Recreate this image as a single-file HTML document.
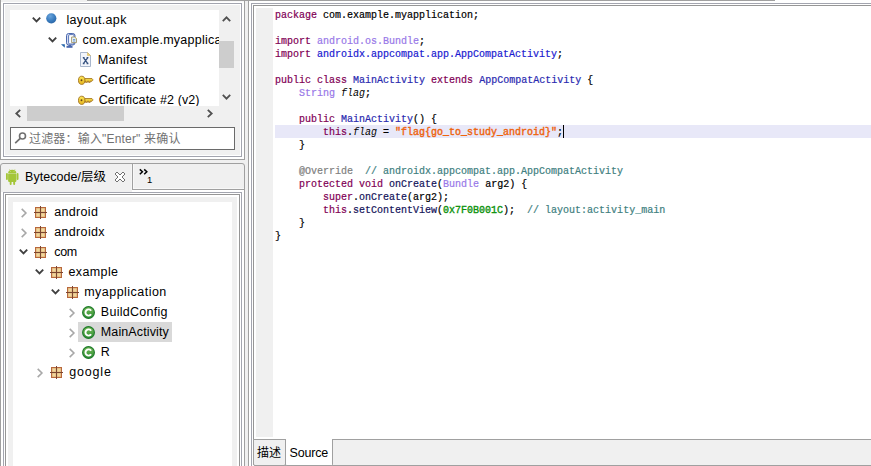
<!DOCTYPE html>
<html><head><meta charset="utf-8"><title>JEB</title><style>
html,body{margin:0;padding:0;width:871px;height:466px;overflow:hidden;}
#root{position:absolute;left:0;top:0;width:871px;height:466px;overflow:hidden;background:#f0f0f0;}
body{width:871px;height:466px;overflow:hidden;background:#f0f0f0;position:relative;font-family:"Liberation Sans","Noto Sans CJK SC",sans-serif;font-size:12.5px;color:#000;}
.a{position:absolute;}
.box{position:absolute;box-sizing:border-box;}
.t{position:absolute;white-space:nowrap;line-height:20px;height:20px;font-size:12.5px;color:#000;}
.code{position:absolute;left:275px;top:9px;-webkit-text-stroke:0.2px currentColor;font-family:"Liberation Mono",monospace;font-size:10px;line-height:13px;white-space:pre;color:#000;}
.code div{height:13px;}
.k{color:#7f0055;}
.c1{color:#2a2ab0;}
.c2{color:#9878e8;}
.c3{color:#1a1ad0;}
.f{font-style:italic;-webkit-text-stroke:0;}
.s{color:#ee6410;-webkit-text-stroke:0.4px currentColor;}
.n{color:#0c920c;-webkit-text-stroke:0.35px currentColor;}
.cm{color:#408080;}
.an{color:#808080;}
.m{color:#14145a;}
svg{position:absolute;overflow:visible;}
</style></head><body><div id="root">
<div class="box" style="left:0;top:-2px;width:245px;height:162px;border:1px solid #a0a0a0;background:#fff;"></div>
<div class="box" style="left:3px;top:3px;width:239px;height:154px;border:1px solid #a3a5af;background:#fff;"></div>
<div class="a" style="left:5px;top:5px;width:235px;height:150px;background:#f0f0f0;"></div>
<div class="a" style="left:0px;top:0px;width:87px;height:2px;background:#f0f0f0;"></div>
<div class="a" style="left:87px;top:1px;width:157px;height:1px;background:#f8f8f8;"></div>
<div class="a" style="left:0px;top:0px;width:1px;height:2px;background:#a0a0a0;"></div>
<div class="a" style="left:10px;top:10px;width:209px;height:96px;background:#fff;"></div>
<div class="a" style="left:219px;top:41px;width:15px;height:27px;background:#cdcdcd;"></div>
<div class="a" style="left:27px;top:106px;width:97px;height:15px;background:#cdcdcd;"></div>
<div class="box" style="left:10px;top:127px;width:225px;height:23px;border:1px solid #6a6a6a;background:#fff;"></div>
<div class="box" style="left:0;top:163px;width:245px;height:320px;border:1px solid #a0a0a0;border-radius:3px 3px 0 0;background:#f0f0f0;"></div>
<div class="a" style="left:133px;top:164px;width:1px;height:25px;background:#f8f8f8;"></div>
<div class="a" style="left:133px;top:188px;width:111px;height:1px;background:#f8f8f8;"></div>
<div class="a" style="left:131px;top:165px;width:1px;height:25px;background:#f6f6f6;"></div>
<div class="a" style="left:132px;top:164px;width:1px;height:26px;background:#a0a0a0;"></div>
<div class="a" style="left:132px;top:189px;width:112px;height:1px;background:#a0a0a0;"></div>
<div class="a" style="left:1px;top:190px;width:243px;height:300px;background:#fff;"></div>
<div class="a" style="left:1px;top:190px;width:131px;height:2px;background:#f0f0f0;"></div>
<div class="box" style="left:3px;top:192px;width:239px;height:300px;border:1px solid #a3a5af;background:#fff;"></div>
<div class="box" style="left:5px;top:194px;width:235px;height:300px;border:1px solid #969696;background:#fff;"></div>
<div class="a" style="left:8px;top:197px;width:229px;height:300px;background:#f0f0f0;"></div>
<div class="a" style="left:13px;top:202px;width:219px;height:300px;background:#fff;"></div>
<div class="box" style="left:248px;top:-1px;width:700px;height:500px;border:1px solid #a0a0a0;background:#fff;"></div>
<div class="box" style="left:251px;top:3px;width:700px;height:500px;border:1px solid #a3a5af;background:#fff;"></div>
<div class="box" style="left:253px;top:5px;width:700px;height:460px;border:1px solid #969696;background:#fff;"></div>
<div class="a" style="left:256px;top:8px;width:17px;height:429px;background:#f0f0f0;"></div>
<div class="a" style="left:275px;top:125px;width:600px;height:13px;background:#e8e8f8;"></div>
<div class="a" style="left:563px;top:125px;width:1px;height:13px;background:#000;"></div>
<div class="a" style="left:254px;top:439px;width:700px;height:26px;background:#f0f0f0;"></div>
<div class="a" style="left:254px;top:439px;width:700px;height:1px;background:#a0a0a0;"></div>
<div class="a" style="left:254px;top:465px;width:700px;height:1px;background:#a0a0a0;"></div>
<div class="box" style="left:253px;top:439px;width:33px;height:27px;border:1px solid #a0a0a0;border-radius:0 0 2px 2px;background:#f0f0f0;"></div>
<div class="box" style="left:285px;top:439px;width:48px;height:27px;border:1px solid #a0a0a0;border-top:none;border-radius:0 0 2px 2px;background:#fff;"></div>
<div class="a" style="left:87px;top:0px;width:688px;height:1px;background:#a0a0a0;"></div>
<div class="code"><div><span class="k">package</span> com.example.myapplication;</div><div></div><div><span class="k">import</span> <span class="c2">android.os.Bundle</span>;</div><div><span class="k">import</span> <span class="c3">androidx.appcompat.app.AppCompatActivity</span>;</div><div></div><div><span class="k">public</span> <span class="k">class</span> <span class="c1">MainActivity</span> <span class="k">extends</span> <span class="c1">AppCompatActivity</span> {</div><div>    <span class="c2">String</span> <span class="f">flag</span>;</div><div></div><div>    <span class="k">public</span> <span class="c1">MainActivity</span>() {</div><div>        <span class="k">this</span>.<span class="f">flag</span> = <span class="s">&quot;flag{go_to_study_android}&quot;</span>;</div><div>    }</div><div></div><div>    <span class="an">@Override</span>  <span class="cm">// androidx.appcompat.app.AppCompatActivity</span></div><div>    <span class="k">protected</span> <span class="k">void</span> <span class="m">onCreate</span>(<span class="c2">Bundle</span> arg2) {</div><div>        <span class="k">super</span>.<span class="m">onCreate</span>(arg2);</div><div>        <span class="k">this</span>.<span class="m">setContentView</span>(<span class="n">0x7F0B001C</span>);  <span class="cm">// layout:activity_main</span></div><div>    }</div><div>}</div></div>
<div class="a" style="left:10px;top:10px;width:209px;height:96px;overflow:hidden;">
<div class="t" id="t1" style="left:56.45px;top:0px;letter-spacing:0.33px;">layout.apk</div>
<div class="t" id="t2" style="left:72.4px;top:20px;letter-spacing:0.25px;">com.example.myapplication</div>
<div class="t" id="t3" style="left:87.82px;top:40px;letter-spacing:0.282px;">Manifest</div>
<div class="t" id="t4" style="left:88.72px;top:60px;letter-spacing:0.036px;">Certificate</div>
<div class="t" id="t5" style="left:88.72px;top:80px;letter-spacing:0.12px;">Certificate #2 (v2)</div>
</div>
<div class="t" id="flt" style="left:29.0px;top:129px;color:#727272;font-size:12px;letter-spacing:0.179px;">过滤器：输入&quot;Enter&quot; 来确认</div>
<div class="t" id="tab" style="left:25.0px;top:167px;letter-spacing:0.045px;">Bytecode/层级</div>
<svg style="left:139px;top:169px" width="10" height="6" viewBox="0 0 10 6"><path d="M0.8 0.4 L3.4 2.8 L0.8 5.2 M5.2 0.4 L7.8 2.8 L5.2 5.2" fill="none" stroke="#000" stroke-width="1.5"/></svg>
<div class="t" id="one" style="left:147px;top:170px;font-size:9.5px;">1</div>
<div class="a" style="left:78px;top:322px;width:94px;height:20px;background:#d9d9d9;"></div>
<div class="t" id="b1" style="left:54.26px;top:202px;letter-spacing:0.33px;">android</div>
<div class="t" id="b2" style="left:54.26px;top:222px;letter-spacing:0.334px;">androidx</div>
<div class="t" id="b3" style="left:54.26px;top:242px;letter-spacing:-0.36px;">com</div>
<div class="t" id="b4" style="left:68.55px;top:262px;letter-spacing:0.375px;">example</div>
<div class="t" id="b5" style="left:84.19px;top:282px;letter-spacing:0.474px;">myapplication</div>
<div class="t" id="b6" style="left:100.82px;top:302px;letter-spacing:0.27px;">BuildConfig</div>
<div class="t" id="b7" style="left:100.82px;top:322px;letter-spacing:0.114px;">MainActivity</div>
<div class="t" id="b8" style="left:100.82px;top:342px;">R</div>
<div class="t" id="b9" style="left:69.18px;top:362px;letter-spacing:0.828px;">google</div>
<div class="t" id="desc" style="left:257.0px;top:443px;font-size:12px;letter-spacing:-0.09px;">描述</div>
<div class="t" id="src" style="left:289.55px;top:443px;letter-spacing:-0.198px;">Source</div>
<svg style="left:32.0px;top:16.8px" width="9" height="6" viewBox="0 0 9 6"><path d="M0.8 0.7 L4.5 4.4 L8.2 0.7" fill="none" stroke="#404040" stroke-width="1.9"/></svg>
<svg style="left:48.0px;top:37px" width="9" height="6" viewBox="0 0 9 6"><path d="M0.8 0.7 L4.5 4.4 L8.2 0.7" fill="none" stroke="#404040" stroke-width="1.9"/></svg>
<svg style="left:222px;top:16px" width="9" height="6" viewBox="0 0 9 6"><path d="M0.8 5.2 L4.5 1.3 L8.2 5.2" fill="none" stroke="#505050" stroke-width="1.8"/></svg>
<svg style="left:222px;top:94px" width="9" height="6" viewBox="0 0 9 6"><path d="M0.8 0.8 L4.5 4.7 L8.2 0.8" fill="none" stroke="#505050" stroke-width="1.8"/></svg>
<svg style="left:15px;top:109px" width="6" height="9" viewBox="0 0 6 9"><path d="M5.2 0.8 L1.3 4.5 L5.2 8.2" fill="none" stroke="#505050" stroke-width="1.8"/></svg>
<svg style="left:207px;top:109px" width="6" height="9" viewBox="0 0 6 9"><path d="M0.8 0.8 L4.7 4.5 L0.8 8.2" fill="none" stroke="#505050" stroke-width="1.8"/></svg>
<svg style="left:46px;top:13px" width="11" height="11" viewBox="0 0 11 11"><defs><radialGradient id="bg1" cx="0.4" cy="0.3" r="0.75"><stop offset="0" stop-color="#6aa4dc"/><stop offset="0.6" stop-color="#3a7cbe"/><stop offset="1" stop-color="#2a64a4"/></radialGradient></defs><circle cx="5.3" cy="5.3" r="5.1" fill="url(#bg1)"/></svg>
<svg style="left:60px;top:32px" width="18" height="17" viewBox="0 0 18 17">
<path d="M1 12.2 L4.8 12.2 L4.8 15.8 Z" fill="#2464aa"/>
<rect x="6.5" y="1.5" width="8.5" height="11.5" rx="2.2" fill="#d4dcf2" stroke="#4a68ae" stroke-width="1"/>
<rect x="8.6" y="2.6" width="5.5" height="9.4" rx="1.2" fill="#fff" stroke="#4a68ae" stroke-width="0.9"/>
<rect x="6.5" y="13.8" width="6" height="2" fill="#4a68ae"/>
<rect x="8.5" y="13" width="2.5" height="1.2" fill="#4a68ae"/>
<path d="M11.6 5 L15 5 L16.5 6.5 L16.5 10.6 L11.6 10.6 Z" fill="#e4f2fa" stroke="#a09468" stroke-width="0.9"/>
<path d="M15 5 L16.5 6.5 L15 6.5 Z" fill="#f0d060"/>
<path d="M13 7.6 H15.3 M13 9 H15.3" stroke="#5080c0" stroke-width="0.8"/>
</svg>
<svg style="left:80px;top:52px" width="12" height="15" viewBox="0 0 12 15">
<path d="M0.5 0.5 L7.5 0.5 L10.5 3.5 L10.5 14.5 L0.5 14.5 Z" fill="#f2f5fb" stroke="#a8b6cc" stroke-width="1"/>
<path d="M7.5 0.5 L10.5 3.5 L7.5 3.5 Z" fill="#f0d070" stroke="#d0b050" stroke-width="0.5"/>
<path d="M3.6 5.8 L7.6 11.4 M7.6 5.8 L3.6 11.4 M2.8 5.7 H4.6 M6.6 5.7 H8.4 M2.8 11.5 H4.6 M6.6 11.5 H8.4" stroke="#34507e" stroke-width="1.3" fill="none"/>
</svg>
<svg style="left:78px;top:75px" width="16" height="11" viewBox="0 0 16 11">
<defs><linearGradient id="kg75" x1="0" y1="0" x2="0" y2="1"><stop offset="0" stop-color="#fbe858"/><stop offset="1" stop-color="#e6b41c"/></linearGradient></defs>
<path d="M6.6 3.6 L14 3.6 L14.7 4.3 L14.7 5.4 L14 6.2 L12.2 6.2 L12.2 7.3 L10.6 7.3 L10.6 6.2 L9.4 6.2 L9.4 7.3 L7.4 7.3 L7.4 6.2 L6.6 6.2 Z" fill="url(#kg75)" stroke="#a0701c" stroke-width="0.9"/>
<ellipse cx="3.7" cy="5.3" rx="3.2" ry="4.1" fill="url(#kg75)" stroke="#a0701c" stroke-width="0.9"/>
<circle cx="3.5" cy="5.3" r="0.95" fill="#6a4210"/>
</svg>
<div class="a" style="left:70px;top:90px;width:30px;height:16px;overflow:hidden;">
<svg style="left:8px;top:5px" width="16" height="11" viewBox="0 0 16 11">
<defs><linearGradient id="kg5" x1="0" y1="0" x2="0" y2="1"><stop offset="0" stop-color="#fbe858"/><stop offset="1" stop-color="#e6b41c"/></linearGradient></defs>
<path d="M6.6 3.6 L14 3.6 L14.7 4.3 L14.7 5.4 L14 6.2 L12.2 6.2 L12.2 7.3 L10.6 7.3 L10.6 6.2 L9.4 6.2 L9.4 7.3 L7.4 7.3 L7.4 6.2 L6.6 6.2 Z" fill="url(#kg5)" stroke="#a0701c" stroke-width="0.9"/>
<ellipse cx="3.7" cy="5.3" rx="3.2" ry="4.1" fill="url(#kg5)" stroke="#a0701c" stroke-width="0.9"/>
<circle cx="3.5" cy="5.3" r="0.95" fill="#6a4210"/>
</svg>
</div>
<svg style="left:14px;top:131px" width="12" height="13" viewBox="0 0 12 13"><circle cx="8.5" cy="5" r="3" fill="none" stroke="#707070" stroke-width="1.6"/><path d="M6.2 7.4 L1.2 12.2" stroke="#707070" stroke-width="1.7"/></svg>
<svg style="left:6px;top:169px" width="13" height="16" viewBox="0 0 13 16">
<g fill="#a4c639">
<path d="M2.1 4.3 A4.15 3.6 0 0 1 10.4 4.3 Z"/>
<rect x="2.1" y="4.6" width="8.3" height="8.3" rx="0.8"/>
<rect x="0" y="4" width="1.85" height="7" rx="0.9"/>
<rect x="10.65" y="4" width="1.85" height="7" rx="0.9"/>
<rect x="3.7" y="12" width="1.9" height="3.9" rx="0.9"/>
<rect x="7.2" y="12" width="1.9" height="3.9" rx="0.9"/>
</g>
<path d="M3.4 0.2 L4.4 1.6 M9.1 0.2 L8.1 1.6" stroke="#a4c639" stroke-width="0.5"/>
<circle cx="4.5" cy="2.7" r="0.4" fill="#e8f0c8"/><circle cx="8" cy="2.7" r="0.4" fill="#e8f0c8"/>
</svg>
<svg style="left:114px;top:171px" width="12" height="12" viewBox="0 0 12 12"><path d="M1 3 L3 1 L6 4 L9 1 L11 3 L8 6 L11 9 L9 11 L6 8 L3 11 L1 9 L4 6 Z" fill="#fff" stroke="#707070" stroke-width="1"/></svg>
<svg style="left:21px;top:207.5px" width="6" height="10" viewBox="0 0 6 10"><path d="M0.7 0.9 L4.9 5 L0.7 9.1" fill="none" stroke="#a8a8a8" stroke-width="1.6"/></svg>
<svg style="left:34px;top:206px" width="13" height="13" viewBox="0 0 13 13">
<rect x="1.5" y="1.5" width="10" height="10" fill="#dfb27c" stroke="#b8683c" stroke-width="1"/>
<rect x="2.6" y="2.6" width="3" height="3" fill="#f0d89c"/><rect x="7.4" y="2.6" width="3" height="3" fill="#f0d89c"/><rect x="2.6" y="7.4" width="3" height="3" fill="#f0d89c"/><rect x="7.4" y="7.4" width="3" height="3" fill="#f0d89c"/>
<path d="M6.5 0 V13 M0 6.5 H13" stroke="#7a4630" stroke-width="1"/>
</svg>
<svg style="left:21px;top:227.5px" width="6" height="10" viewBox="0 0 6 10"><path d="M0.7 0.9 L4.9 5 L0.7 9.1" fill="none" stroke="#a8a8a8" stroke-width="1.6"/></svg>
<svg style="left:34px;top:226px" width="13" height="13" viewBox="0 0 13 13">
<rect x="1.5" y="1.5" width="10" height="10" fill="#dfb27c" stroke="#b8683c" stroke-width="1"/>
<rect x="2.6" y="2.6" width="3" height="3" fill="#f0d89c"/><rect x="7.4" y="2.6" width="3" height="3" fill="#f0d89c"/><rect x="2.6" y="7.4" width="3" height="3" fill="#f0d89c"/><rect x="7.4" y="7.4" width="3" height="3" fill="#f0d89c"/>
<path d="M6.5 0 V13 M0 6.5 H13" stroke="#7a4630" stroke-width="1"/>
</svg>
<svg style="left:18.8px;top:248.7px" width="9" height="6" viewBox="0 0 9 6"><path d="M0.8 0.7 L4.5 4.4 L8.2 0.7" fill="none" stroke="#404040" stroke-width="1.9"/></svg>
<svg style="left:34px;top:246px" width="13" height="13" viewBox="0 0 13 13">
<rect x="1.5" y="1.5" width="10" height="10" fill="#dfb27c" stroke="#b8683c" stroke-width="1"/>
<rect x="2.6" y="2.6" width="3" height="3" fill="#f0d89c"/><rect x="7.4" y="2.6" width="3" height="3" fill="#f0d89c"/><rect x="2.6" y="7.4" width="3" height="3" fill="#f0d89c"/><rect x="7.4" y="7.4" width="3" height="3" fill="#f0d89c"/>
<path d="M6.5 0 V13 M0 6.5 H13" stroke="#7a4630" stroke-width="1"/>
</svg>
<svg style="left:34.8px;top:268.7px" width="9" height="6" viewBox="0 0 9 6"><path d="M0.8 0.7 L4.5 4.4 L8.2 0.7" fill="none" stroke="#404040" stroke-width="1.9"/></svg>
<svg style="left:50px;top:266px" width="13" height="13" viewBox="0 0 13 13">
<rect x="1.5" y="1.5" width="10" height="10" fill="#dfb27c" stroke="#b8683c" stroke-width="1"/>
<rect x="2.6" y="2.6" width="3" height="3" fill="#f0d89c"/><rect x="7.4" y="2.6" width="3" height="3" fill="#f0d89c"/><rect x="2.6" y="7.4" width="3" height="3" fill="#f0d89c"/><rect x="7.4" y="7.4" width="3" height="3" fill="#f0d89c"/>
<path d="M6.5 0 V13 M0 6.5 H13" stroke="#7a4630" stroke-width="1"/>
</svg>
<svg style="left:50.8px;top:288.7px" width="9" height="6" viewBox="0 0 9 6"><path d="M0.8 0.7 L4.5 4.4 L8.2 0.7" fill="none" stroke="#404040" stroke-width="1.9"/></svg>
<svg style="left:66px;top:286px" width="13" height="13" viewBox="0 0 13 13">
<rect x="1.5" y="1.5" width="10" height="10" fill="#dfb27c" stroke="#b8683c" stroke-width="1"/>
<rect x="2.6" y="2.6" width="3" height="3" fill="#f0d89c"/><rect x="7.4" y="2.6" width="3" height="3" fill="#f0d89c"/><rect x="2.6" y="7.4" width="3" height="3" fill="#f0d89c"/><rect x="7.4" y="7.4" width="3" height="3" fill="#f0d89c"/>
<path d="M6.5 0 V13 M0 6.5 H13" stroke="#7a4630" stroke-width="1"/>
</svg>
<svg style="left:69px;top:307.5px" width="6" height="10" viewBox="0 0 6 10"><path d="M0.7 0.9 L4.9 5 L0.7 9.1" fill="none" stroke="#a8a8a8" stroke-width="1.6"/></svg>
<svg style="left:82px;top:306px" width="13" height="13" viewBox="0 0 13 13">
<defs><linearGradient id="cg306" x1="0" y1="0" x2="0" y2="1"><stop offset="0" stop-color="#78bc58"/><stop offset="1" stop-color="#2c8c34"/></linearGradient></defs>
<circle cx="6.5" cy="6.5" r="5.9" fill="url(#cg306)" stroke="#1f7a2c" stroke-width="1.1"/>
<path d="M9.1 4.7 A3.1 3.1 0 1 0 9.1 8.3" fill="none" stroke="#fff" stroke-width="1.9"/>
</svg>
<svg style="left:69px;top:327.5px" width="6" height="10" viewBox="0 0 6 10"><path d="M0.7 0.9 L4.9 5 L0.7 9.1" fill="none" stroke="#a8a8a8" stroke-width="1.6"/></svg>
<svg style="left:82px;top:326px" width="13" height="13" viewBox="0 0 13 13">
<defs><linearGradient id="cg326" x1="0" y1="0" x2="0" y2="1"><stop offset="0" stop-color="#78bc58"/><stop offset="1" stop-color="#2c8c34"/></linearGradient></defs>
<circle cx="6.5" cy="6.5" r="5.9" fill="url(#cg326)" stroke="#1f7a2c" stroke-width="1.1"/>
<path d="M9.1 4.7 A3.1 3.1 0 1 0 9.1 8.3" fill="none" stroke="#fff" stroke-width="1.9"/>
</svg>
<svg style="left:69px;top:347.5px" width="6" height="10" viewBox="0 0 6 10"><path d="M0.7 0.9 L4.9 5 L0.7 9.1" fill="none" stroke="#a8a8a8" stroke-width="1.6"/></svg>
<svg style="left:82px;top:346px" width="13" height="13" viewBox="0 0 13 13">
<defs><linearGradient id="cg346" x1="0" y1="0" x2="0" y2="1"><stop offset="0" stop-color="#78bc58"/><stop offset="1" stop-color="#2c8c34"/></linearGradient></defs>
<circle cx="6.5" cy="6.5" r="5.9" fill="url(#cg346)" stroke="#1f7a2c" stroke-width="1.1"/>
<path d="M9.1 4.7 A3.1 3.1 0 1 0 9.1 8.3" fill="none" stroke="#fff" stroke-width="1.9"/>
</svg>
<svg style="left:37px;top:367.5px" width="6" height="10" viewBox="0 0 6 10"><path d="M0.7 0.9 L4.9 5 L0.7 9.1" fill="none" stroke="#a8a8a8" stroke-width="1.6"/></svg>
<svg style="left:50px;top:366px" width="13" height="13" viewBox="0 0 13 13">
<rect x="1.5" y="1.5" width="10" height="10" fill="#dfb27c" stroke="#b8683c" stroke-width="1"/>
<rect x="2.6" y="2.6" width="3" height="3" fill="#f0d89c"/><rect x="7.4" y="2.6" width="3" height="3" fill="#f0d89c"/><rect x="2.6" y="7.4" width="3" height="3" fill="#f0d89c"/><rect x="7.4" y="7.4" width="3" height="3" fill="#f0d89c"/>
<path d="M6.5 0 V13 M0 6.5 H13" stroke="#7a4630" stroke-width="1"/>
</svg>
</div></body></html>
